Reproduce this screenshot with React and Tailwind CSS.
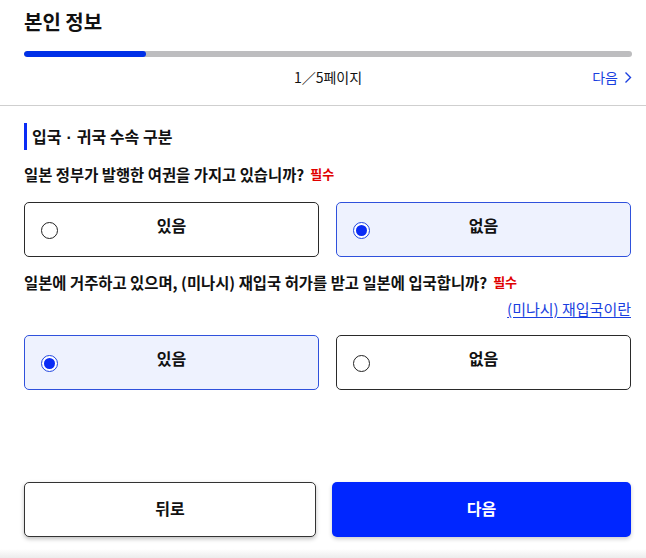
import React from "react";

const font = { fontFamily: '"Noto Sans CJK KR", "Noto Sans", sans-serif' };

function Radio({ checked }) {
  return checked ? (
    <span className="flex h-[17px] w-[17px] items-center justify-center rounded-full border-[1.5px] border-[#1f45e0] bg-white">
      <span className="block h-[11px] w-[11px] rounded-full bg-[#0a2cf5]" />
    </span>
  ) : (
    <span className="block h-[17px] w-[17px] rounded-full border-[1.2px] border-[#222] bg-white" />
  );
}

function Option({ label, checked }) {
  return (
    <div
      className={
        "relative flex h-[55px] items-start justify-center rounded-[5px] border " +
        (checked ? "border-[#2f51dc] bg-[#eef2fe]" : "border-[#2a2a2a] bg-white")
      }
    >
      <span className="absolute left-[16px] top-[19px]">
        <Radio checked={checked} />
      </span>
      <span className="mt-[10px] text-[16px] font-bold leading-[24px] text-[#111]">{label}</span>
    </div>
  );
}

export default function App() {
  return (
    <div className="flex h-[558px] w-[646px] flex-col bg-white text-[#111]" style={font}>
      <div className="pl-6 pr-[14px] pt-[8px]">
        <h1 className="text-[20px] font-bold leading-[28px]">본인 정보</h1>
        <div className="mt-[15px] h-[6px] w-full overflow-hidden rounded-full bg-[#bdbdbf]">
          <div className="h-full w-[122px] rounded-full bg-[#0030e8]" />
        </div>
        <div className="relative mt-[10px] flex h-[20px] items-center justify-center">
          <span className="text-[14px] leading-[20px]">1／5페이지</span>
          <span className="absolute right-0 top-0 flex items-center gap-[6px] text-[14px] leading-[20px] text-[#1a3fe0]">
            다음
            <svg width="8" height="13" viewBox="0 0 8 13" fill="none">
              <path d="M1.5 1.5L6.5 6.5L1.5 11.5" stroke="#1a3fe0" strokeWidth="1.4" />
            </svg>
          </span>
        </div>
      </div>
      <div className="mt-[18px] h-px w-full bg-[#cfcfcf]" />

      <div className="pl-6 pr-[15px]">
        <div className="mt-[17px] flex h-[27px] items-center border-l-[3px] border-[#0a2cf5] pl-[5px]">
          <span className="text-[16px] font-bold leading-[24px]">
            입국<span className="mx-[5px]" style={{ fontFamily: '"Liberation Sans", sans-serif' }}>·</span>귀국 수속 구분
          </span>
        </div>

        <div className="mt-[13px] flex items-center gap-[6px]">
          <span className="text-[15.4px] font-bold leading-[22px]">일본 정부가 발행한 여권을 가지고 있습니까?</span>
          <span className="text-[13px] font-bold leading-[18px] text-[#e00000]">필수</span>
        </div>

        <div className="mt-[17px] grid grid-cols-2 gap-[17px]">
          <Option label="있음" checked={false} />
          <Option label="없음" checked={true} />
        </div>

        <div className="mt-[14px] flex items-center gap-[6px]">
          <span className="text-[15.4px] font-bold leading-[22px]">
            일본에 거주하고 있으며, (미나시) 재입국 허가를 받고 일본에 입국합니까?
          </span>
          <span className="text-[13px] font-bold leading-[18px] text-[#e00000]">필수</span>
        </div>
        <div className="mt-[6px] flex justify-end">
          <a className="text-[15px] leading-[20px] text-[#1a3fe0] underline underline-offset-2">(미나시) 재입국이란</a>
        </div>

        <div className="mt-[16px] grid grid-cols-2 gap-[17px]">
          <Option label="있음" checked={true} />
          <Option label="없음" checked={false} />
        </div>
      </div>

      <div className="flex-1" />

      <div className="bg-gradient-to-b from-white from-[88%] to-[#ececec] pb-[21px] pl-6 pr-[15px]">
        <div className="flex gap-[16px]">
          <button className="flex h-[55px] w-[292px] items-center justify-center rounded-[5px] border border-[#333] bg-white pb-[4px] text-[16px] font-bold text-[#111] shadow-[0_2px_4px_rgba(0,0,0,0.25)]">
            뒤로
          </button>
          <button className="flex h-[55px] flex-1 items-center justify-center rounded-[5px] bg-[#0026ff] pb-[4px] text-[16px] font-bold text-white shadow-[0_2px_4px_rgba(0,0,0,0.2)]">
            다음
          </button>
        </div>
      </div>
    </div>
  );
}
